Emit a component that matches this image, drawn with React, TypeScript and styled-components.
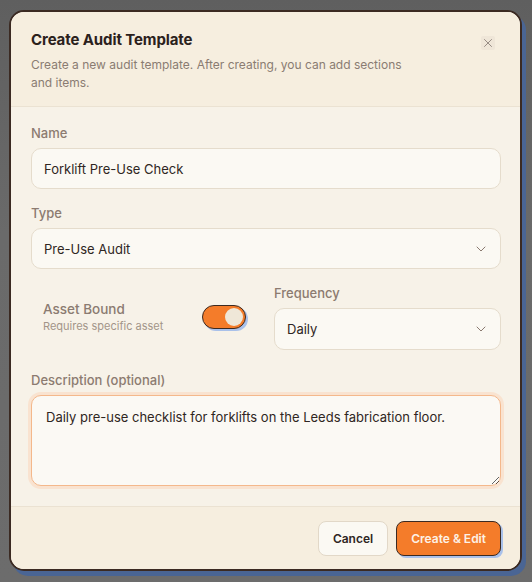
import React, { useState } from "react";
import styled, { createGlobalStyle } from "styled-components";
import { ChevronDown, X } from "lucide-react";

const GlobalStyle = createGlobalStyle`
  html, body {
    margin: 0;
    padding: 0;
    background: #676767;
    font-family: Inter, "Noto Sans", sans-serif;
  }
  * { box-sizing: border-box; }
`;

const Page = styled.div`
  width: 532px;
  height: 582px;
  padding: 10px 0 0 9px;
  background: linear-gradient(180deg, #5f5f5f 0%, #6a6a6a 40%, #6c6c6c 100%);
`;

const Modal = styled.div`
  position: relative;
  width: 513px;
  height: 561px;
  border: 2px solid #3b2a22;
  border-radius: 15px;
  background: #f7f2e8;
  box-shadow: 4px 5px 0 #4a6594;
  overflow: hidden;
  display: flex;
  flex-direction: column;
`;

const Header = styled.div`
  background: #f6eedf;
  padding: 18px 20px 14px 20px;
  border-bottom: 1px solid #ebe2d2;
`;

const Title = styled.h2`
  margin: 0;
  font-size: 15px;
  line-height: 20px;
  font-weight: 700;
  color: #2b211c;
  letter-spacing: -0.1px;
`;

const Subtitle = styled.p`
  margin: 6px 0 0;
  max-width: 392px;
  font-size: 12px;
  line-height: 18px;
  color: #8a7c72;
`;

const CloseButton = styled.button`
  position: absolute;
  top: 24px;
  right: 25px;
  width: 14px;
  height: 14px;
  padding: 0;
  border: none;
  border-radius: 2px;
  background: #efe6d8;
  color: #8a7f78;
  display: flex;
  align-items: center;
  justify-content: center;
`;

const Body = styled.div`
  flex: 1;
  padding: 18px 19px 0 20px;
  display: flex;
  flex-direction: column;
`;

const Field = styled.div<{ $gap?: number }>`
  display: flex;
  flex-direction: column;
  gap: 7px;
  margin-bottom: ${(p) => p.$gap ?? 16}px;
`;

const Label = styled.label`
  font-size: 13px;
  line-height: 16px;
  font-weight: 500;
  color: #8c7b70;
`;

const Input = styled.div<{ $h?: number }>`
  height: ${(p) => p.$h ?? 41}px;
  border: 1px solid #e5dccc;
  border-radius: 10px;
  background: #fbf9f3;
  padding: 0 12px;
  display: flex;
  align-items: center;
  justify-content: space-between;
  font-size: 13px;
  color: #2f2622;
`;

const Chevron = styled(ChevronDown)`
  color: #8a7a70;
  margin-right: -1px;
`;

const Row = styled.div`
  display: grid;
  grid-template-columns: 1fr 1fr;
  gap: 16px;
  margin-bottom: 22px;
`;

const ToggleBox = styled.div`
  display: flex;
  align-items: center;
  justify-content: space-between;
  padding: 0 12px 2px;
`;

const ToggleText = styled.div`
  display: flex;
  flex-direction: column;
  gap: 2px;
`;

const ToggleTitle = styled.span`
  font-size: 13.5px;
  line-height: 16px;
  font-weight: 500;
  color: #8b7b71;
`;

const ToggleHint = styled.span`
  font-size: 11px;
  line-height: 14px;
  color: #a39588;
`;

const Switch = styled.button<{ $on: boolean }>`
  width: 44px;
  height: 24px;
  padding: 0 2px;
  border: 1.5px solid #3b2a22;
  border-radius: 12px;
  background: ${(p) => (p.$on ? "#f47c2a" : "#d9cfc0")};
  box-shadow: 2px 2px 0 #a9c1ea;
  display: flex;
  align-items: center;
  justify-content: ${(p) => (p.$on ? "flex-end" : "flex-start")};
  cursor: pointer;
`;

const Knob = styled.span`
  width: 18px;
  height: 18px;
  border-radius: 50%;
  background: #efe7d8;
`;

const TextArea = styled.textarea`
  height: 91px;
  border: 1.5px solid #f4b88b;
  border-radius: 10px;
  background: #fbf9f4;
  box-shadow: 0 0 0 3px #f9e3d0;
  padding: 12px 14px;
  font-family: inherit;
  font-size: 13px;
  line-height: 18px;
  color: #2f2622;
  resize: vertical;
  outline: none;
`;

const Footer = styled.div`
  background: #f6eedf;
  border-top: 1px solid #ebe2d2;
  padding: 14px 19px 13px;
  display: flex;
  justify-content: flex-end;
  gap: 8px;
`;

const Button = styled.button<{ $primary?: boolean }>`
  height: 35px;
  padding: 0 14px;
  border-radius: 8px;
  font-family: inherit;
  font-size: 12px;
  font-weight: 600;
  cursor: pointer;
  border: ${(p) => (p.$primary ? "1.5px solid #3b2a22" : "1px solid #e2d8c8")};
  background: ${(p) => (p.$primary ? "#f47c2a" : "#fbf9f3")};
  color: ${(p) => (p.$primary ? "#fdf1e6" : "#2f2622")};
  box-shadow: ${(p) => (p.$primary ? "2px 2px 0 #a9c1ea" : "none")};
`;

export default function App() {
  const [bound, setBound] = useState(true);
  return (
    <>
      <GlobalStyle />
      <Page>
        <Modal>
          <Header>
            <Title>Create Audit Template</Title>
            <Subtitle>
              Create a new audit template. After creating, you can add sections and items.
            </Subtitle>
            <CloseButton aria-label="Close">
              <X size={14} strokeWidth={1.5} />
            </CloseButton>
          </Header>
          <Body>
            <Field>
              <Label>Name</Label>
              <Input>Forklift Pre-Use Check</Input>
            </Field>
            <Field>
              <Label>Type</Label>
              <Input>
                Pre-Use Audit
                <Chevron size={16} strokeWidth={1.5} />
              </Input>
            </Field>
            <Row>
              <ToggleBox>
                <ToggleText>
                  <ToggleTitle>Asset Bound</ToggleTitle>
                  <ToggleHint>Requires specific asset</ToggleHint>
                </ToggleText>
                <Switch $on={bound} onClick={() => setBound(!bound)}>
                  <Knob />
                </Switch>
              </ToggleBox>
              <Field $gap={0}>
                <Label>Frequency</Label>
                <Input $h={42}>
                  Daily
                  <Chevron size={16} strokeWidth={1.5} />
                </Input>
              </Field>
            </Row>
            <Field $gap={0}>
              <Label>Description (optional)</Label>
              <TextArea defaultValue="Daily pre-use checklist for forklifts on the Leeds fabrication floor." />
            </Field>
          </Body>
          <Footer>
            <Button>Cancel</Button>
            <Button $primary>Create &amp; Edit</Button>
          </Footer>
        </Modal>
      </Page>
    </>
  );
}
